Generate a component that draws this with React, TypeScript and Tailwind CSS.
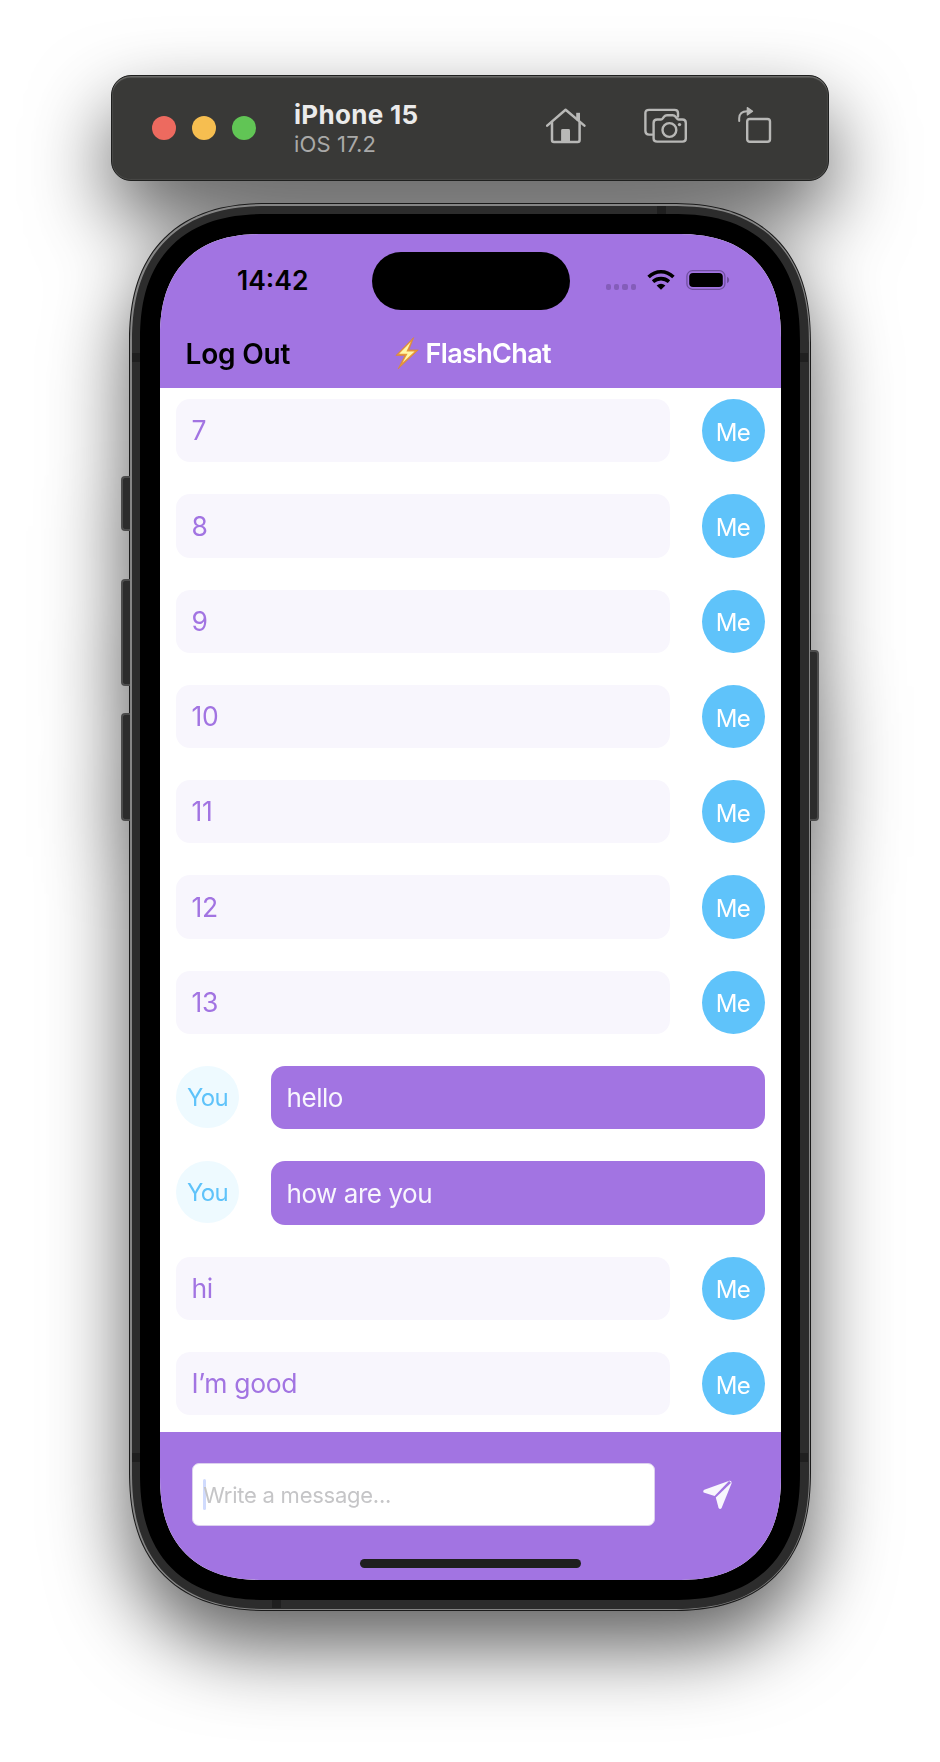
type Message = { text: string; mine: boolean };

const messages: Message[] = [
  { text: "7", mine: true },
  { text: "8", mine: true },
  { text: "9", mine: true },
  { text: "10", mine: true },
  { text: "11", mine: true },
  { text: "12", mine: true },
  { text: "13", mine: true },
  { text: "hello", mine: false },
  { text: "how are you", mine: false },
  { text: "hi", mine: true },
  { text: "I\u2019m good", mine: true },
];

function HomeIcon() {
  return (
    <svg width="40" height="36" viewBox="0 0 40 36" fill="none" stroke="#b8b8b6" strokeWidth="2.5" strokeLinecap="round" strokeLinejoin="round">
      <path d="M1.2 17.6 L19.6 1.8 L38.4 17.6" />
      <path d="M6 14.5 V32 Q6 34 8 34 H31.6 Q33.6 34 33.6 32 V14.5" />
      <path d="M32.1 4.8 V12.4" strokeWidth="3.8" strokeLinecap="butt" />
      <path d="M15.1 34 V22.4 Q15.1 21 16.5 21 H22.6 Q24 21 24 22.4 V34 Z" fill="#b8b8b6" stroke="none" />
    </svg>
  );
}

function ScreenshotIcon() {
  return (
    <svg width="44" height="36" viewBox="0 0 44 36" fill="none" stroke="#b8b8b6" strokeWidth="2.4" strokeLinecap="round" strokeLinejoin="round">
      <path d="M8.2 26.6 H5 Q1.4 26.6 1.4 23 V5 Q1.4 1.9 5 1.9 H30.5 Q34 1.9 34 5 V8.5" />
      <path d="M13.2 11.5 H17 Q18 11.5 18.8 10.4 L20 8.8 Q21.2 7.2 23 7.2 H28.6 Q30.4 7.2 31.6 8.8 L32.8 10.4 Q33.6 11.5 34.6 11.5 H38.4 Q41.8 11.5 41.8 14.9 V30.4 Q41.8 33.6 38.4 33.6 H13.2 Q9.6 33.6 9.6 30.4 V14.9 Q9.6 11.5 13.2 11.5 Z" />
      <circle cx="25.4" cy="22" r="6.9" />
      <circle cx="35.5" cy="16.6" r="1.7" fill="#b8b8b6" stroke="none" />
    </svg>
  );
}

function RotateIcon() {
  return (
    <svg width="34" height="38" viewBox="0 0 34 38" fill="none" stroke="#b8b8b6" strokeWidth="2.4" strokeLinecap="round" strokeLinejoin="round">
      <rect x="9.2" y="13" width="22.8" height="22.8" rx="2.6" />
      <path d="M1.2 15 V12 Q1.6 5.4 9 5.2" strokeWidth="2" />
      <path d="M9.3 1.6 L14.6 5.2 L9.3 9 Z" fill="#b8b8b6" strokeWidth="1.2" />
    </svg>
  );
}

function Toolbar() {
  return (
    <header className="flex h-[106px] w-[718px] shrink-0 items-center rounded-[20px] border border-[#1e1f1e] bg-[#393937] shadow-[inset_0_2px_1px_-0.5px_#6d6d6b,inset_0_0_1px_0.5px_#555553]">
      <div className="ml-10 flex gap-4">
        <span className="size-6 rounded-full bg-[#ed6a5f]" />
        <span className="size-6 rounded-full bg-[#f6be50]" />
        <span className="size-6 rounded-full bg-[#61c555]" />
      </div>
      <div className="ml-[38px] flex w-[220px] flex-col pt-[2px]">
        <span className="text-[26px] leading-[30px] font-bold tracking-[0.3px] whitespace-nowrap text-[#ebebeb]">iPhone 15</span>
        <span className="text-[22px] leading-[28px] tracking-[0.15px] whitespace-nowrap text-[#a9a9a8]">iOS 17.2</span>
      </div>
      <div className="mb-[5px] ml-[32px] flex items-start">
        <HomeIcon />
        <span className="ml-[58px]"><ScreenshotIcon /></span>
        <span className="-mt-[2px] ml-[50px]"><RotateIcon /></span>
      </div>
    </header>
  );
}

function StatusBar() {
  return (
    <div className="flex h-[93px] items-start">
      <span className="mt-[30px] ml-[77px] w-[134.5px] text-[26.5px] leading-8 font-semibold">14:42</span>
      <span className="mt-[17.5px] h-[58px] w-[198px] rounded-full bg-black" />
      <div className="mt-[36px] ml-[36px] flex items-start">
        <span className="mt-[14px] flex gap-[2.9px]">
          <i className="size-[5.5px] rounded-[2px] bg-[#845dba]" />
          <i className="size-[5.5px] rounded-[2px] bg-[#845dba]" />
          <i className="size-[5.5px] rounded-[2px] bg-[#845dba]" />
          <i className="size-[5.5px] rounded-[2px] bg-[#845dba]" />
        </span>
        <svg className="ml-[11px]" width="28" height="20" viewBox="0 0 28 20" fill="none" stroke="#000" strokeWidth="3.6">
          <path d="M1.6 7 Q7 1.8 14 1.8 T26.4 7" />
          <path d="M6 11.6 Q9.5 8.6 14 8.6 T22 11.6" />
          <path d="M14 19.8 L9.6 15.4 Q14 12 18.4 15.4 Z" fill="#000" stroke="none" />
        </svg>
        <svg className="ml-[10.5px]" width="44" height="20" viewBox="0 0 44 20">
          <rect x="0.9" y="0.7" width="38" height="18.6" rx="5.6" fill="none" stroke="#704fa0" strokeWidth="1.3" />
          <rect x="3.2" y="3" width="33.6" height="14" rx="3.8" />
          <path d="M41 6.8 Q43.2 7.6 43.2 10 T41 13.2 Z" fill="#704fa0" />
        </svg>
      </div>
    </div>
  );
}

function NavBar() {
  return (
    <div className="flex h-[61px] items-start leading-8 font-semibold">
      <span className="mt-[11px] ml-[25.5px] w-[209px] text-[28px] tracking-[-0.2px] text-black">Log Out</span>
      <svg className="mt-[10px]" width="24" height="33" viewBox="0 0 24 33">
        <path d="M18.6 0.6 L1 18.4 H10 L3.2 31.8 L23.2 13 H13.8 Z" fill="#e9983a" stroke="#d98a35" strokeWidth="0.7" strokeLinejoin="round" />
        <path d="M15.8 5 L4.2 16.8 H12.6 L7.6 25.6 L19.6 14.6 H11.4 Z" fill="#fff6a8" />
      </svg>
      <span className="mt-[11px] ml-[7px] text-[27px] tracking-[-0.65px] text-white">FlashChat</span>
    </div>
  );
}

function MessageRow({ text, mine }: Message) {
  return (
    <li className="flex h-[63.3px] gap-[31.5px]">
      {!mine && (
        <span className="flex h-[62px] w-[63px] shrink-0 items-center justify-center rounded-[50%] bg-[#eefaff] pt-[2px] text-[24px] tracking-[-0.6px] text-[#5fc3fa]">You</span>
      )}
      <span className={mine ? "flex flex-1 items-center rounded-[14px] bg-[#f8f6fd] pt-[1px] pl-[15.5px] text-[26.5px] tracking-[-0.35px] text-[#a274e2]" : "flex flex-1 items-center rounded-[14px] bg-[#a274e2] pl-4 text-[26px] tracking-[-0.45px] text-[#f8f6fd]"}>
        {text}
      </span>
      {mine && (
        <span className="flex size-[63.3px] shrink-0 items-center justify-center rounded-full bg-[#5fc3fa] pt-[4px] pr-[1px] text-[24px] tracking-[-0.8px] text-white">Me</span>
      )}
    </li>
  );
}

function Composer() {
  return (
    <footer className="flex h-[148.5px] flex-col items-center bg-[#a274e2]">
      <div className="flex w-full items-start pt-[31.5px] pl-[31.7px]">
        <div className="flex h-[63px] w-[463px] items-center rounded-[7px] border border-[#dcd0ee] bg-white pl-[10.5px]">
          <span className="-mr-[3px] h-[31px] w-[3px] rounded-full bg-[#d0dbfd]" />
          <span className="pt-px text-[22px] tracking-[-0.25px] text-[#c5c5c7]">Write a message...</span>
        </div>
        <svg className="mt-[17px] ml-[48px]" width="29" height="30" viewBox="0 0 29 30" fill="#f8f6fd">
          <path d="M26.3 0.8 L1.3 9.8 Q-0.4 10.7 0.6 12.4 L11.6 16 Z" />
          <path d="M28.4 2.4 L12.8 17.6 L15.6 28 Q17 30.2 18.6 28 L28.5 3.4 Z" />
          <path d="M26 0.8 Q28.6 0.2 28.6 3 L27.6 2.6 Z" />
        </svg>
      </div>
      <span className="mt-[33px] h-[8.5px] w-[221px] rounded-full bg-[#1f1f1f]" />
    </footer>
  );
}

function SideButton({ className }: { className: string }) {
  return <span className={`absolute w-[9px] border-2 border-[#4c4c4c] bg-[#2c2c2c] ${className}`} />;
}

function Phone() {
  return (
    <main className="relative mt-[22px] h-[1408px] w-[682px] shrink-0">
      <SideButton className="top-[273px] -left-2 h-[55px] rounded-l-[4px] border-r-0" />
      <SideButton className="top-[376px] -left-2 h-[107px] rounded-l-[4px] border-r-0" />
      <SideButton className="top-[510px] -left-2 h-[108px] rounded-l-[4px] border-r-0" />
      <SideButton className="top-[447px] -right-2 h-[171px] rounded-r-[4px] border-l-0" />
      <div className="h-full w-full rounded-[140px] bg-[#1a1a1a] p-px [corner-shape:superellipse(1.27)]">
        <div className="h-full w-full rounded-[139px] bg-[#858585] p-[1.5px] [corner-shape:superellipse(1.27)]">
          <div className="h-full w-full rounded-[137px] bg-[#2c2c2c] p-[8.5px] [corner-shape:superellipse(1.27)]">
            <div className="h-full w-full rounded-[127px] bg-black py-5 pr-[19px] pl-5 [corner-shape:superellipse(1.27)]">
              <div className="flex h-full w-full flex-col overflow-hidden rounded-[104px] bg-white [corner-shape:superellipse(1.27)]">
                <div className="bg-[#a274e2]">
                  <StatusBar />
                  <NavBar />
                </div>
                <ul className="flex flex-1 flex-col gap-8 px-4 pt-[11px]">
                  {messages.map((m) => (
                    <MessageRow key={m.text} {...m} />
                  ))}
                </ul>
                <Composer />
              </div>
            </div>
          </div>
        </div>
      </div>
      <span className="absolute top-[3px] left-[528px] h-2 w-[9px] bg-[#1f1f1f]" />
      <span className="absolute bottom-[3px] left-[143px] h-2 w-[9px] bg-[#1f1f1f]" />
      <span className="absolute top-[150px] left-[3px] h-[9px] w-2 bg-[#1f1f1f]" />
      <span className="absolute top-[150px] right-[3px] h-[9px] w-2 bg-[#1f1f1f]" />
      <span className="absolute top-[1250px] left-[3px] h-[9px] w-2 bg-[#1f1f1f]" />
      <span className="absolute top-[1250px] right-[3px] h-[9px] w-2 bg-[#1f1f1f]" />
    </main>
  );
}

export default function App() {
  return (
    <div className="h-[1762px] w-[940px] overflow-hidden bg-white font-['Inter','Liberation_Sans',sans-serif]">
      <div className="flex h-full flex-col items-center pt-[75px] [filter:drop-shadow(0_36px_40px_rgba(0,0,0,0.63))]">
        <Toolbar />
        <Phone />
      </div>
    </div>
  );
}
